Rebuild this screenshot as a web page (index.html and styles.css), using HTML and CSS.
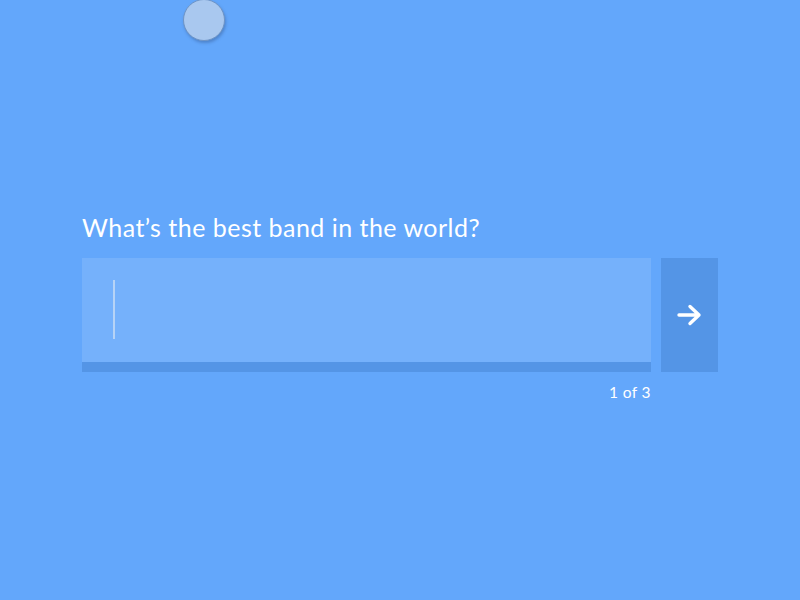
FILE: index.html
```html
<!DOCTYPE html>
<html>
<head>
<meta charset="utf-8">
<link rel="stylesheet" href="styles.css">
</head>
<body>
<div class="dot"></div>
<main class="form">
  <label class="question">What’s the best band in the world?</label>
  <div class="row">
    <div class="field">
      <div class="input"><span class="caret"></span></div>
      <div class="underline"></div>
    </div>
    <button class="next" aria-label="Next">
      <svg width="26" height="22" viewBox="0 0 26 22"><path d="M2 11H22M13 2.5L22 11L13 19.5" fill="none" stroke="#fff" stroke-width="3.4" stroke-linecap="round" stroke-linejoin="round"/></svg>
    </button>
  </div>
  <div class="progress">1 of 3</div>
</main>
</body>
</html>
```
FILE: styles.css
```css
html, body {
  margin: 0;
  padding: 0;
  width: 800px;
  height: 600px;
  background: #63a7fb;
  font-family: Lato, "Noto Sans", sans-serif;
  overflow: hidden;
}
.dot {
  position: absolute;
  left: 183px;
  top: -1px;
  width: 40px;
  height: 40px;
  border-radius: 50%;
  background: #a9c8ef;
  border: 1px solid #6f95c6;
  box-shadow: 1px 2px 3px rgba(40, 70, 120, 0.35);
}
.form {
  display: flex;
  flex-direction: column;
  padding: 210px 0 0 82px;
}
.question {
  color: #fff;
  font-size: 25px;
  line-height: 35px;
  height: 48px;
  letter-spacing: 0.48px;
}
.row {
  display: flex;
  gap: 10px;
}
.field {
  width: 569px;
  display: flex;
  flex-direction: column;
}
.input {
  height: 104px;
  background: #75b1fb;
  padding: 22px 0 0 31px;
  box-sizing: border-box;
}
.caret {
  display: block;
  width: 2px;
  height: 59px;
  background: #b6d3f6;
}
.underline {
  height: 10px;
  background: #5495e6;
}
.next {
  width: 57px;
  height: 114px;
  border: 0;
  padding: 0;
  background: #5495e6;
  display: flex;
  align-items: center;
  justify-content: center;
}
.progress {
  width: 569px;
  text-align: right;
  color: #fff;
  font-size: 15.5px;
  letter-spacing: 0.4px;
  margin-top: 11px;
}
```
